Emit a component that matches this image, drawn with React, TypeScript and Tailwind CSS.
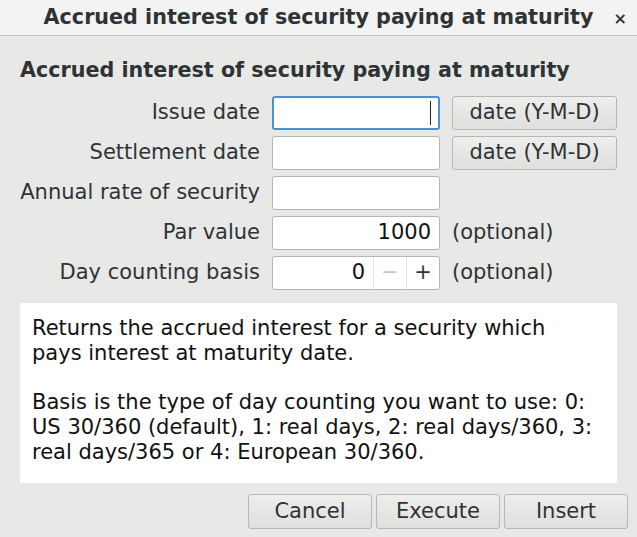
// Dialog: accrued interest of a security paying at maturity.
import * as React from "react"

const font = { fontFamily: '"DejaVu Sans", "Liberation Sans", sans-serif' }

function Field({ value, focused }: { value?: string; focused?: boolean }) {
  return (
    <div
      className={
        "flex h-[34px] w-[168px] items-center justify-end rounded-[3px] bg-white px-[8px] text-[21px] text-[#111] " +
        (focused ? "border-2 border-[#4a90d9]" : "border border-[#b6b6b3]")
      }
    >
      {focused ? <span className="mr-[-1px] h-[24px] w-px bg-[#222]" /> : value}
    </div>
  )
}

function DateButton() {
  return (
    <button
      type="button"
      className="h-[34px] w-[165px] rounded-[3px] border border-[#b6b6b3] bg-gradient-to-b from-[#eeeeec] to-[#dfdfdd] text-[21px] text-[#2e3436]"
    >
      date (Y-M-D)
    </button>
  )
}

function Row({ label, children }: { label: string; children: React.ReactNode }) {
  return (
    <>
      <div className="flex h-[34px] items-center justify-end whitespace-nowrap pr-[12px] text-[21px] text-[#2e3436]">
        {label}
      </div>
      <div className="flex items-center gap-[12px]">{children}</div>
    </>
  )
}

function ActionButton({ label }: { label: string }) {
  return (
    <button
      type="button"
      className="h-[35px] w-[124px] rounded-[3px] border border-[#b6b6b3] bg-gradient-to-b from-[#eeeeec] to-[#dfdfdd] text-[21px] text-[#2e3436]"
    >
      {label}
    </button>
  )
}

export default function App() {
  return (
    <div className="flex h-[537px] w-[637px] flex-col bg-[#e8e8e7]" style={font}>
      <div className="relative flex h-[36px] items-center justify-center border-b border-[#c4c4c2] bg-[#f3f3f3]">
        <span className="text-[20.7px] font-bold text-[#2e3436]">Accrued interest of security paying at maturity</span>
        <span className="absolute right-[10px] top-[7px] text-[16px] font-bold text-[#2e3436]">×</span>
      </div>

      <div className="px-[20px] pt-[21px]">
        <h1 className="whitespace-nowrap text-[20.7px] font-bold leading-[26px] text-[#2e3436]">
          Accrued interest of security paying at maturity
        </h1>

        <div className="mt-[13px] grid grid-cols-[252px_1fr] gap-y-[6px]">
          <Row label="Issue date">
            <Field focused />
            <DateButton />
          </Row>
          <Row label="Settlement date">
            <Field />
            <DateButton />
          </Row>
          <Row label="Annual rate of security">
            <Field />
          </Row>
          <Row label="Par value">
            <Field value="1000" />
            <span className="text-[21px] text-[#2e3436]">(optional)</span>
          </Row>
          <Row label="Day counting basis">
            <div className="flex h-[34px] w-[168px] overflow-hidden rounded-[3px] border border-[#b6b6b3] bg-white text-[21px]">
              <div className="flex flex-1 items-center justify-end pr-[8px] text-[#111]">0</div>
              <div className="flex w-[33px] items-center justify-center border-l border-[#e2e2e0] text-[#c8c8c6]">−</div>
              <div className="flex w-[33px] items-center justify-center border-l border-[#e2e2e0] text-[#2e3436]">+</div>
            </div>
            <span className="text-[21px] text-[#2e3436]">(optional)</span>
          </Row>
        </div>

        <div className="mt-[13px] h-[180px] whitespace-nowrap bg-white px-[12px] pt-[13px] text-[21px] leading-[25px] text-[#111]">
          <p>
            Returns the accrued interest for a security which
            <br />
            pays interest at maturity date.
          </p>
          <p className="mt-[24px]">
            Basis is the type of day counting you want to use: 0:
            <br />
            US 30/360 (default), 1: real days, 2: real days/360, 3:
            <br />
            real days/365 or 4: European 30/360.
          </p>
        </div>
      </div>

      <div className="mt-[11px] flex justify-end gap-[4px] pr-[9px]">
        <ActionButton label="Cancel" />
        <ActionButton label="Execute" />
        <ActionButton label="Insert" />
      </div>
    </div>
  )
}
